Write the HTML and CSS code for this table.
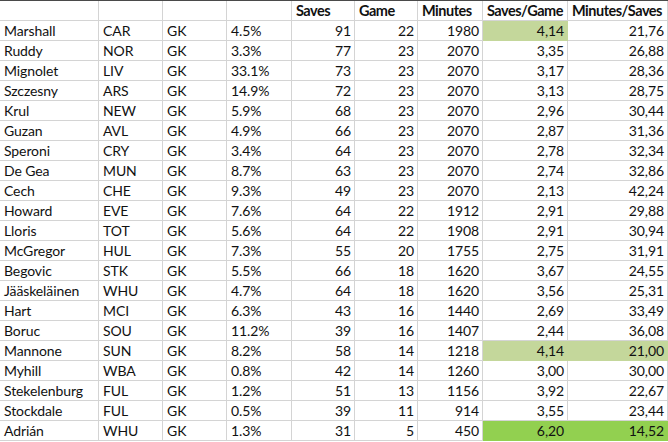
FILE: index.html
```html
<!DOCTYPE html>
<html>
<head>
<meta charset="utf-8">
<link rel="stylesheet" href="styles.css">
</head>
<body>
<div class="sheet">
  <div class="row head">
    <div class="c"></div><div class="c"></div><div class="c"></div><div class="c"></div>
    <div class="c">Saves</div><div class="c">Game</div><div class="c">Minutes</div><div class="c">Saves/Game</div><div class="c">Minutes/Saves</div>
  </div>
  <div class="row"><div class="c">Marshall</div><div class="c">CAR</div><div class="c">GK</div><div class="c">4.5%</div><div class="c n">91</div><div class="c n">22</div><div class="c n">1980</div><div class="c n lg">4,14</div><div class="c n">21,76</div></div>
  <div class="row"><div class="c">Ruddy</div><div class="c">NOR</div><div class="c">GK</div><div class="c">3.3%</div><div class="c n">77</div><div class="c n">23</div><div class="c n">2070</div><div class="c n">3,35</div><div class="c n">26,88</div></div>
  <div class="row"><div class="c">Mignolet</div><div class="c">LIV</div><div class="c">GK</div><div class="c">33.1%</div><div class="c n">73</div><div class="c n">23</div><div class="c n">2070</div><div class="c n">3,17</div><div class="c n">28,36</div></div>
  <div class="row"><div class="c">Szczesny</div><div class="c">ARS</div><div class="c">GK</div><div class="c">14.9%</div><div class="c n">72</div><div class="c n">23</div><div class="c n">2070</div><div class="c n">3,13</div><div class="c n">28,75</div></div>
  <div class="row"><div class="c">Krul</div><div class="c">NEW</div><div class="c">GK</div><div class="c">5.9%</div><div class="c n">68</div><div class="c n">23</div><div class="c n">2070</div><div class="c n">2,96</div><div class="c n">30,44</div></div>
  <div class="row"><div class="c">Guzan</div><div class="c">AVL</div><div class="c">GK</div><div class="c">4.9%</div><div class="c n">66</div><div class="c n">23</div><div class="c n">2070</div><div class="c n">2,87</div><div class="c n">31,36</div></div>
  <div class="row"><div class="c">Speroni</div><div class="c">CRY</div><div class="c">GK</div><div class="c">3.4%</div><div class="c n">64</div><div class="c n">23</div><div class="c n">2070</div><div class="c n">2,78</div><div class="c n">32,34</div></div>
  <div class="row"><div class="c">De Gea</div><div class="c">MUN</div><div class="c">GK</div><div class="c">8.7%</div><div class="c n">63</div><div class="c n">23</div><div class="c n">2070</div><div class="c n">2,74</div><div class="c n">32,86</div></div>
  <div class="row"><div class="c">Cech</div><div class="c">CHE</div><div class="c">GK</div><div class="c">9.3%</div><div class="c n">49</div><div class="c n">23</div><div class="c n">2070</div><div class="c n">2,13</div><div class="c n">42,24</div></div>
  <div class="row"><div class="c">Howard</div><div class="c">EVE</div><div class="c">GK</div><div class="c">7.6%</div><div class="c n">64</div><div class="c n">22</div><div class="c n">1912</div><div class="c n">2,91</div><div class="c n">29,88</div></div>
  <div class="row"><div class="c">Lloris</div><div class="c">TOT</div><div class="c">GK</div><div class="c">5.6%</div><div class="c n">64</div><div class="c n">22</div><div class="c n">1908</div><div class="c n">2,91</div><div class="c n">30,94</div></div>
  <div class="row"><div class="c">McGregor</div><div class="c">HUL</div><div class="c">GK</div><div class="c">7.3%</div><div class="c n">55</div><div class="c n">20</div><div class="c n">1755</div><div class="c n">2,75</div><div class="c n">31,91</div></div>
  <div class="row"><div class="c">Begovic</div><div class="c">STK</div><div class="c">GK</div><div class="c">5.5%</div><div class="c n">66</div><div class="c n">18</div><div class="c n">1620</div><div class="c n">3,67</div><div class="c n">24,55</div></div>
  <div class="row"><div class="c">Jääskeläinen</div><div class="c">WHU</div><div class="c">GK</div><div class="c">4.7%</div><div class="c n">64</div><div class="c n">18</div><div class="c n">1620</div><div class="c n">3,56</div><div class="c n">25,31</div></div>
  <div class="row"><div class="c">Hart</div><div class="c">MCI</div><div class="c">GK</div><div class="c">6.3%</div><div class="c n">43</div><div class="c n">16</div><div class="c n">1440</div><div class="c n">2,69</div><div class="c n">33,49</div></div>
  <div class="row"><div class="c">Boruc</div><div class="c">SOU</div><div class="c">GK</div><div class="c">11.2%</div><div class="c n">39</div><div class="c n">16</div><div class="c n">1407</div><div class="c n">2,44</div><div class="c n">36,08</div></div>
  <div class="row"><div class="c">Mannone</div><div class="c">SUN</div><div class="c">GK</div><div class="c">8.2%</div><div class="c n">58</div><div class="c n">14</div><div class="c n">1218</div><div class="c n lg">4,14</div><div class="c n lg">21,00</div></div>
  <div class="row"><div class="c">Myhill</div><div class="c">WBA</div><div class="c">GK</div><div class="c">0.8%</div><div class="c n">42</div><div class="c n">14</div><div class="c n">1260</div><div class="c n">3,00</div><div class="c n">30,00</div></div>
  <div class="row"><div class="c">Stekelenburg</div><div class="c">FUL</div><div class="c">GK</div><div class="c">1.2%</div><div class="c n">51</div><div class="c n">13</div><div class="c n">1156</div><div class="c n">3,92</div><div class="c n">22,67</div></div>
  <div class="row"><div class="c">Stockdale</div><div class="c">FUL</div><div class="c">GK</div><div class="c">0.5%</div><div class="c n">39</div><div class="c n">11</div><div class="c n">914</div><div class="c n">3,55</div><div class="c n">23,44</div></div>
  <div class="row"><div class="c">Adrián</div><div class="c">WHU</div><div class="c">GK</div><div class="c">1.3%</div><div class="c n">31</div><div class="c n">5</div><div class="c n">450</div><div class="c n bg">6,20</div><div class="c n bg">14,52</div></div>
</div>
</body>
</html>
```

FILE: styles.css
```css
html, body {
  margin: 0;
  padding: 0;
  background: #ffffff;
}

.sheet {
  width: 668px;
  border-top: 1px solid #4a4a4a;
  font-family: Lato, "Open Sans", sans-serif;
  font-size: 14px;
  letter-spacing: -0.1px;
  color: #111111;
}

.row {
  display: grid;
  grid-template-columns: 99px 64px 64px 65px 63px 63px 65px 85px 100px;
}

.c {
  height: 20px;
  box-sizing: border-box;
  border-right: 1px solid #d4d4d4;
  border-bottom: 1px solid #d4d4d4;
  padding: 0 3px 0 4px;
  line-height: 20px;
  white-space: nowrap;
  overflow: hidden;
}

.head .c {
  font-weight: bold;
  font-size: 14.5px;
  letter-spacing: -0.5px;
}

.n {
  text-align: right;
}

.lg {
  background: #c4d79b;
  border-color: #c4d79b;
}

.bg {
  background: #92d050;
  border-color: #92d050;
}
```
